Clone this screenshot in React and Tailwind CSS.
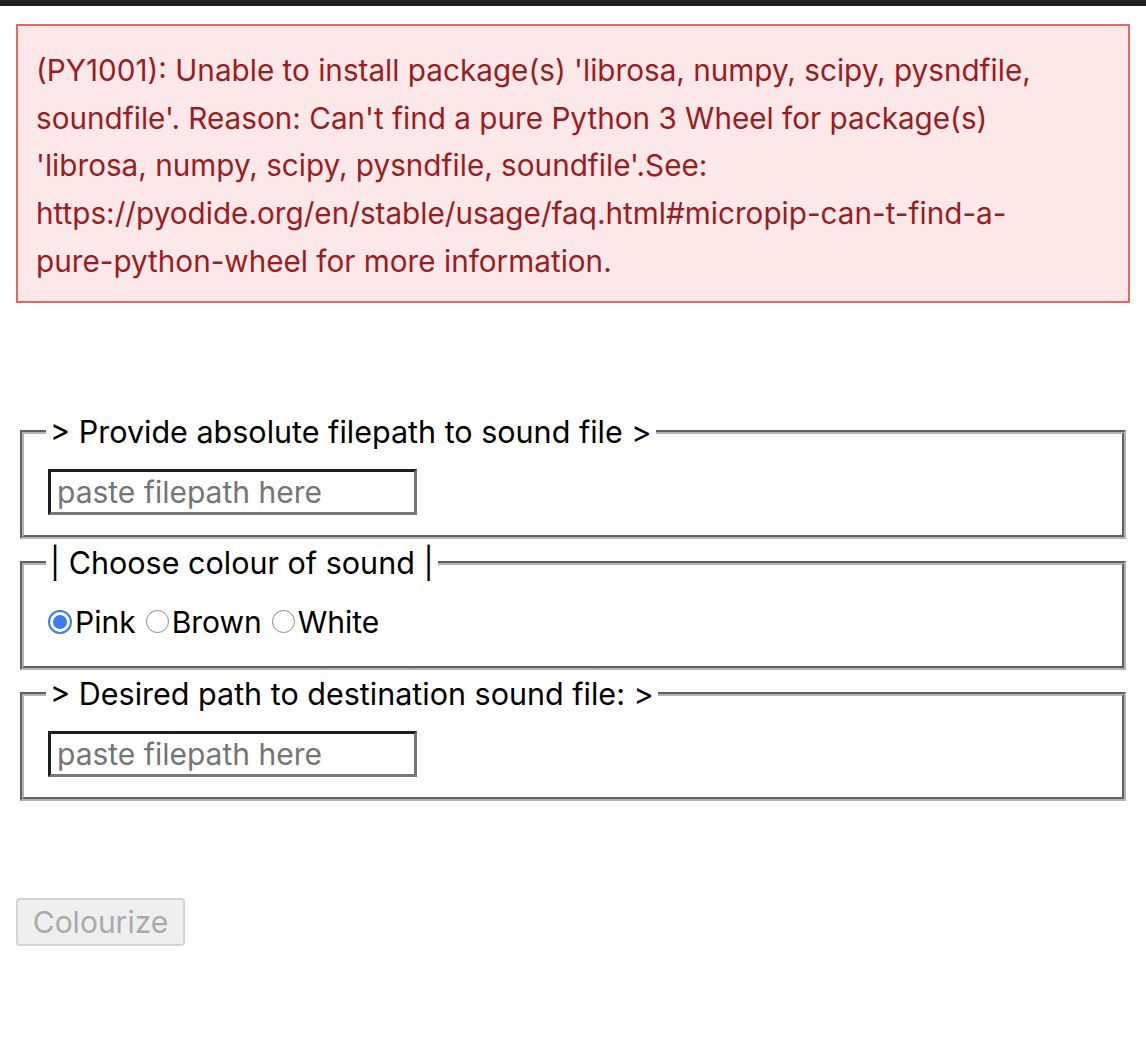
import React from 'react';

const font = { fontFamily: 'Inter, "Noto Sans", sans-serif' };

const Radio = ({ checked, label }) => (
  <label className="flex items-center">
    {checked ? (
      <span className="w-[24px] h-[24px] rounded-full border-2 border-[#3b7cf0] bg-white flex items-center justify-center">
        <span className="w-[14px] h-[14px] rounded-full bg-[#3b7cf0]" />
      </span>
    ) : (
      <span className="w-[23px] h-[23px] rounded-full border-[1.5px] border-[#8a8a8a] bg-white" />
    )}
    <span className="ml-[3px]">{label}</span>
  </label>
);

const Fieldset = ({ legend, children, pt = 'pt-[20px]', pb = 'pb-[20px]' }) => (
  <fieldset className={`mx-[20px] border-4 [border-style:groove] border-[#b4b4b4] px-[24px] ${pt} ${pb}`}>
    <legend className="ml-[-2px] px-[4px] text-[30.5px] leading-[34px] text-black">{legend}</legend>
    {children}
  </fieldset>
);

const PathInput = () => (
  <input
    placeholder="paste filepath here"
    className="block w-[369px] h-[46px] border-[3px] border-t-[#1e1e1e] border-l-[#1e1e1e] border-b-[#777777] border-r-[#777777] px-[6px] text-[30px] text-black placeholder:text-[#757575] outline-none"
  />
);

export default function App() {
  return (
    <div className="min-h-[1054px] bg-white" style={font}>
      <div className="h-[6px] bg-[#222222]" />
      <div className="mx-[16px] mt-[18px] border-2 border-[#e06a66] bg-[#fce8e8] px-[18px] pt-[21px] pb-[15px] text-[29.7px] leading-[47.7px] text-[#9b1c1f]">
        (PY1001): Unable to install package(s) 'librosa, numpy, scipy, pysndfile,
        <br />
        soundfile'. Reason: Can't find a pure Python 3 Wheel for package(s)
        <br />
        'librosa, numpy, scipy, pysndfile, soundfile'.See:
        <br />
        https://pyodide.org/en/stable/usage/faq.html#micropip-can-t-find-a-
        <br />
        pure-python-wheel for more information.
      </div>

      <div className="mt-[112px] flex flex-col gap-[7px]">
        <Fieldset legend="> Provide absolute filepath to sound file >">
          <PathInput />
        </Fieldset>
        <Fieldset legend="| Choose colour of sound |" pt="pt-[21px]" pb="pb-[23px]">
          <div className="flex items-center gap-[10px] h-[42px] text-[30px] leading-[34px] text-black">
            <Radio checked label="Pink" />
            <Radio label="Brown" />
            <Radio label="White" />
          </div>
        </Fieldset>
        <Fieldset legend="> Desired path to destination sound file: >">
          <PathInput />
        </Fieldset>
      </div>

      <button
        disabled
        className="ml-[16px] mt-[97px] h-[48px] w-[169px] rounded-[4px] border-2 border-[#d4d4d4] bg-[#efefef] text-[30px] text-[#aaaaaa]"
      >
        Colourize
      </button>
    </div>
  );
}
